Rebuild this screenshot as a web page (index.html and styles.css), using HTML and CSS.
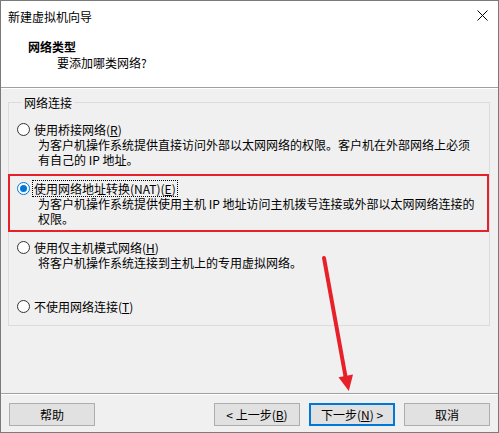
FILE: index.html
```html
<!DOCTYPE html>
<html lang="zh-CN">
<head>
<meta charset="utf-8">
<title>新建虚拟机向导</title>
<link rel="stylesheet" href="styles.css">
</head>
<body>
<div class="window">
  <div class="top">
    <div class="titlebar">
      <span class="title">新建虚拟机向导</span>
      <svg class="close" width="11" height="11" viewBox="0 0 11 11"><path d="M0.5 0.5 L10.5 10.5 M10.5 0.5 L0.5 10.5" stroke="#000" stroke-width="1" fill="none"/></svg>
    </div>
    <div class="heading">网络类型</div>
    <div class="subheading">要添加哪类网络?</div>
  </div>

  <div class="main">
    <fieldset class="group">
      <legend>网络连接</legend>
      <div class="option">
        <div class="opt-row"><span class="radio"></span><span class="label">使用桥接网络(<u>R</u>)</span></div>
        <div class="desc">为客户机操作系统提供直接访问外部以太网网络的权限。客户机在外部网络上必须有自己的 IP 地址。</div>
      </div>
      <div class="option">
        <div class="opt-row"><span class="radio checked"></span><span class="label focus">使用网络地址转换(NAT)(<u>E</u>)</span></div>
        <div class="desc">为客户机操作系统提供使用主机 IP 地址访问主机拨号连接或外部以太网网络连接的权限。</div>
      </div>
      <div class="option">
        <div class="opt-row"><span class="radio"></span><span class="label">使用仅主机模式网络(<u>H</u>)</span></div>
        <div class="desc">将客户机操作系统连接到主机上的专用虚拟网络。</div>
      </div>
      <div class="option last">
        <div class="opt-row"><span class="radio"></span><span class="label">不使用网络连接(<u>T</u>)</span></div>
      </div>
    </fieldset>
  </div>

  <div class="footer">
    <button class="btn">帮助</button>
    <div class="nav">
      <button class="btn">&lt; 上一步(<u>B</u>)</button>
      <button class="btn default">下一步(<u>N</u>) &gt;</button>
      <button class="btn">取消</button>
    </div>
  </div>

  <div class="highlight"></div>
  <svg class="arrow" width="499" height="433" viewBox="0 0 499 433">
    <line x1="324" y1="258" x2="345.6" y2="377" stroke="#e8202a" stroke-width="4" stroke-linecap="round"/>
    <polygon points="348.8,391 353,374.5 338.5,377.3" fill="#e8202a"/>
  </svg>
</div>
</body>
</html>
```

FILE: styles.css
```css
html, body {
  margin: 0;
  padding: 0;
  background: #f0f0f0;
}

body {
  font-family: "Microsoft YaHei UI", "Noto Sans CJK SC", sans-serif;
  font-size: 12px;
  line-height: 15px;
  color: #000;
}

.window {
  position: relative;
  width: 499px;
  height: 433px;
  box-sizing: border-box;
  border: 1px solid #7a7a7a;
  background: #f0f0f0;
  display: flex;
  flex-direction: column;
}

.top {
  background: #fff;
  height: 87px;
  box-sizing: border-box;
  border-bottom: 1px solid #a0a0a0;
  padding-top: 8px;
}

.titlebar {
  display: flex;
  justify-content: space-between;
  align-items: flex-start;
  padding: 0 10px 0 7px;
}

.close {
  display: block;
  margin-top: 1px;
}

.heading {
  font-weight: bold;
  margin-top: 15px;
  padding-left: 27px;
}

.subheading {
  margin-top: 1px;
  padding-left: 56px;
}

.main {
  flex: 1;
  border-top: 1px solid #fff;
  padding: 6px 8px 0 7px;
}

.group {
  margin: 0;
  padding: 12px 0 11px 8px;
  border: 1px solid #dcdcdc;
  min-width: 0;
}

.group legend {
  margin-left: 5px;
  padding: 0 2px;
  line-height: 15px;
}

.option {
  min-height: 45px;
  margin-bottom: 14px;
}

.option.last {
  min-height: 15px;
  margin-bottom: 0;
}

.opt-row {
  display: flex;
  align-items: center;
  height: 15px;
}

.radio {
  width: 13px;
  height: 13px;
  box-sizing: border-box;
  border: 1px solid #333;
  border-radius: 50%;
  background: #fff;
  margin-right: 3px;
  margin-top: -1px;
  display: flex;
  align-items: center;
  justify-content: center;
  flex: none;
}

.radio.checked {
  border-color: #0078d7;
}

.radio.checked::after {
  content: "";
  width: 7px;
  height: 7px;
  border-radius: 50%;
  background: #0078d7;
}

.label {
  padding: 0 1px;
  white-space: nowrap;
}

.label.focus {
  outline: 1px dotted #000;
  outline-offset: 0;
}

.desc {
  padding-left: 21px;
  max-width: 442px;
}

.footer {
  height: 39px;
  box-sizing: border-box;
  border-top: 1px solid #a0a0a0;
  box-shadow: inset 0 1px 0 #fff;
  padding: 9px 8px 0 8px;
  display: flex;
  justify-content: space-between;
  align-items: flex-start;
}

.nav {
  display: flex;
  gap: 9px;
}

.btn {
  width: 86px;
  height: 23px;
  box-sizing: border-box;
  margin: 0;
  padding: 0;
  border: 1px solid #adadad;
  background: #e1e1e1;
  font-family: inherit;
  font-size: 12px;
  line-height: 15px;
  color: #000;
}

.btn.default {
  border: 2px solid #0078d7;
}

.highlight {
  position: absolute;
  left: 7px;
  top: 173px;
  width: 481px;
  height: 58px;
  box-sizing: border-box;
  border: 2px solid #e8202a;
  pointer-events: none;
}

.arrow {
  position: absolute;
  left: -1px;
  top: -1px;
  pointer-events: none;
}
```
